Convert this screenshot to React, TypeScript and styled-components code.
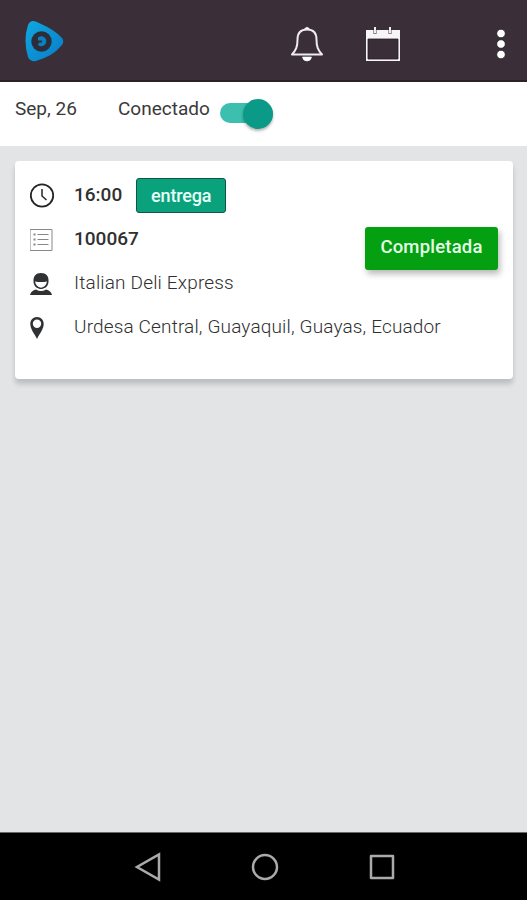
import React from "react";
import styled, { createGlobalStyle } from "styled-components";

const GlobalStyle = createGlobalStyle`
  * { box-sizing: border-box; }
  body { margin: 0; background: #e2e4e6; font-family: Roboto, sans-serif; }
`;

const Screen = styled.div`
  display: flex;
  flex-direction: column;
  height: 900px;
  overflow: hidden;
  background: #e2e4e6;
`;

const Header = styled.header`
  display: flex;
  align-items: flex-start;
  height: 82px;
  padding: 20px 20px 0 24px;
  background: #3a2f38;
  border-bottom: 2px solid #2b2129;
`;

const HeaderActions = styled.div`
  display: flex;
  align-items: flex-start;
  margin-left: auto;
  padding-top: 6px;
`;

const IconButton = styled.button<{ $gap?: number; $drop?: number }>`
  display: flex;
  margin: ${(p) => p.$drop ?? 0}px 0 0 ${(p) => p.$gap ?? 0}px;
  padding: 0;
  border: 0;
  background: none;
`;

const StatusBar = styled.section`
  display: flex;
  align-items: flex-start;
  height: 64px;
  padding: 15px 15px 0;
  background: #fff;
`;

const StatusText = styled.span<{ $width: number }>`
  width: ${(p) => p.$width}px;
  font-size: 19px;
  line-height: 23px;
  white-space: nowrap;
  color: #3a3a3a;
`;

const Toggle = styled.div`
  display: flex;
  align-items: center;
  justify-content: flex-end;
  width: 53px;
  height: 20px;
  margin-top: 6px;
  border-radius: 10px;
  background: #3cbfae;
`;

const ToggleThumb = styled.div`
  width: 30px;
  height: 30px;
  margin-top: 1px;
  border-radius: 50%;
  background: #0b9a88;
  box-shadow: 0 2px 3px rgba(0, 0, 0, 0.3);
`;

const Content = styled.main`
  flex: 1;
  padding: 15px 14px 0 15px;
`;

const Card = styled.article`
  display: flex;
  height: 218px;
  padding: 12px 15px 0;
  border-radius: 4px;
  background: #fff;
  box-shadow: 0 5px 5px rgba(0, 0, 0, 0.17);
`;

const Details = styled.div`
  display: flex;
  flex: 1;
  flex-direction: column;
  min-width: 0;
`;

const Row = styled.div`
  display: flex;
  align-items: center;
  height: 44px;
`;

const RowIcon = styled.span`
  display: flex;
  flex: none;
  width: 44px;
`;

const RowText = styled.span<{ $strong?: boolean; $spacing?: number }>`
  font-size: 19px;
  line-height: 24px;
  font-weight: ${(p) => (p.$strong ? 500 : 300)};
  color: ${(p) => (p.$strong ? "#303030" : "#303030")};
  letter-spacing: ${(p) => p.$spacing ?? 0}px;
  white-space: nowrap;
`;

const Tag = styled.span`
  display: flex;
  align-items: center;
  justify-content: center;
  width: 90px;
  height: 35px;
  margin: 1px 0 0 14px;
  border: 1.5px solid #145444;
  border-radius: 3px;
  background: #0aa27c;
  color: #e6fff7;
  font-size: 18px;
  font-weight: 500;
  letter-spacing: -0.15px;
`;

const StateButton = styled.button`
  flex: none;
  width: 133px;
  height: 43px;
  margin-top: 54px;
  padding: 0 0 4px;
  border: 0;
  border-radius: 3px;
  background: #04a012;
  box-shadow: 2px 4px 6px rgba(0, 0, 0, 0.28);
  color: #e4ffe6;
  font: 500 18.5px Roboto, sans-serif;
  letter-spacing: 0.2px;
`;

const NavBar = styled.nav`
  display: flex;
  align-items: center;
  justify-content: space-between;
  height: 68px;
  padding: 1px 131px 0 134px;
  background: #000;
  border-top: 1px solid #68696a;
`;

const Logo = () => (
  <svg width="41" height="42" viewBox="0 0 41 42">
    <defs>
      <linearGradient id="logo" x1="0" x2="1" y1="0" y2="1">
        <stop offset="0" stopColor="#10a9e0" />
        <stop offset="1" stopColor="#087bc8" />
      </linearGradient>
    </defs>
    <path d="M8 1Q11 .5 15 3Q31 10 38 18Q41 22 37 26Q29 36 12 41Q6 42 4 37Q-1 20 4 5Q5 2 8 1Z" fill="url(#logo)" />
    <circle cx="17.5" cy="21.5" r="10.2" fill="#2c2c3a" />
    <path d="M14 17.500A5 5 0 1 1 14 25L15 22.500H18V20.500H14Z" fill="#0b80bc" />
  </svg>
);

const Bell = () => (
  <svg width="34" height="36" viewBox="0 0 34 36" fill="none">
    <path d="M17 3.500C10 3.500 7.500 8 7.500 13.500C7.500 21 6 24 2 28.500H32C28 24 26.500 21 26.500 13.500C26.500 8 24 3.500 17 3.500Z" stroke="#eeeaee" strokeWidth="2" strokeLinejoin="round" />
    <path d="M14.500 3Q17 -.5 19.500 3M12.500 31H21.500Q21 35 17 35T12.500 31Z" fill="#fff" stroke="#fff" strokeWidth=".6" />
  </svg>
);

const CalendarIcon = () => (
  <svg width="36" height="36" viewBox="0 0 36 36">
    <path d="M1 4H35V35H1Z" fill="#f7f5f7" />
    <path d="M3 13H33V33H3Z" fill="#3a2f38" stroke="#241c23" strokeWidth=".8" />
    <path d="M10 4V8M25 4V8" stroke="#8a8289" strokeWidth="3.500" />
    <path d="M10 1V7M25 1V7" stroke="#eee" strokeWidth="2" />
  </svg>
);

const MoreIcon = () => (
  <svg width="12" height="32" viewBox="0 0 12 32">
    {[5.5, 16, 26.5].map((y) => (
      <circle key={y} cx="6" cy={y} r="4.300" fill="#fff" stroke="#211a20" strokeWidth=".8" />
    ))}
  </svg>
);

const Clock = () => (
  <svg width="25" height="25" viewBox="0 0 25 25" fill="none" stroke="#252525">
    <circle cx="12" cy="12.500" r="11.200" strokeWidth="1.800" />
    <path d="M12 6V13L16.500 17" strokeWidth="1.500" />
  </svg>
);

const ListIcon = () => (
  <svg width="24" height="26" viewBox="0 0 24 26" fill="none" stroke="#888">
    <g transform="translate(-.5 2)">
      <path d="M.5 1.500H22.500V22.500H.5Z" />
      <path d="M8 6.500H19M8 11.500H19M8 16.500H19" />
      <path d="M4 6.500H6M4 11.500H6M4 16.500H6" strokeWidth="2" />
    </g>
  </svg>
);

const Person = () => (
  <svg width="23" height="26" viewBox="0 0 23 26">
    <g transform="translate(0 2)">
      <path d="M3.500 10C3 4 6 1 11 1S19 4 18.500 10C18 15 14 17 11 17S4 15 3.500 10Z" fill="#303132" />
      <path d="M5 9.500Q11 10.500 17 9.500Q16 15 11 15.800Q6 15 5 9.500Z" fill="#fff" />
      <path d="M0 23Q1 18.500 6 17.500Q11 20.500 16 17.500Q21 18.500 22 23Z" fill="#303132" />
    </g>
  </svg>
);

const Pin = () => (
  <svg width="15" height="26" viewBox="0 0 15 26">
    <path d="M7 3C3 3 .300 6 .300 10C.300 15 4 19 7 25C10 19 13.700 15 13.700 10C13.700 6 11 3 7 3ZM7 5.500A4.200 4.200 0 1 1 7 13.900A4.200 4.200 0 1 1 7 5.500Z" fill="#303132" />
  </svg>
);

export default function App() {
  return (
    <>
      <GlobalStyle />
      <Screen>
        <Header>
          <Logo />
          <HeaderActions>
            <IconButton aria-label="Notificaciones"><Bell /></IconButton>
            <IconButton $gap={41} aria-label="Calendario"><CalendarIcon /></IconButton>
            <IconButton $gap={94} $drop={2} aria-label="Más opciones"><MoreIcon /></IconButton>
          </HeaderActions>
        </Header>
        <StatusBar>
          <StatusText $width={103}>Sep, 26</StatusText>
          <StatusText $width={102}>Conectado</StatusText>
          <Toggle role="switch" aria-checked="true"><ToggleThumb /></Toggle>
        </StatusBar>
        <Content>
          <Card>
            <Details>
              <Row>
                <RowIcon><Clock /></RowIcon>
                <RowText $strong>16:00</RowText>
                <Tag>entrega</Tag>
              </Row>
              <Row>
                <RowIcon><ListIcon /></RowIcon>
                <RowText $strong>100067</RowText>
              </Row>
              <Row>
                <RowIcon><Person /></RowIcon>
                <RowText $spacing={0.17}>Italian Deli Express</RowText>
              </Row>
              <Row>
                <RowIcon><Pin /></RowIcon>
                <RowText $spacing={0.15}>Urdesa Central, Guayaquil, Guayas, Ecuador</RowText>
              </Row>
            </Details>
            <StateButton>Completada</StateButton>
          </Card>
        </Content>
        <NavBar>
          <svg width="28" height="30" viewBox="0 0 28 30"><path d="M25 2.500V27.500L3 15Z" fill="none" stroke="#aaa" strokeWidth="2.500" /></svg>
          <svg width="28" height="28" viewBox="0 0 28 28"><circle cx="14" cy="14" r="12" fill="none" stroke="#aaa" strokeWidth="2.500" /></svg>
          <svg width="28" height="28" viewBox="0 0 28 28"><path d="M3 3H25V25H3Z" fill="none" stroke="#aaa" strokeWidth="2.500" strokeLinejoin="round" /></svg>
        </NavBar>
      </Screen>
    </>
  );
}
